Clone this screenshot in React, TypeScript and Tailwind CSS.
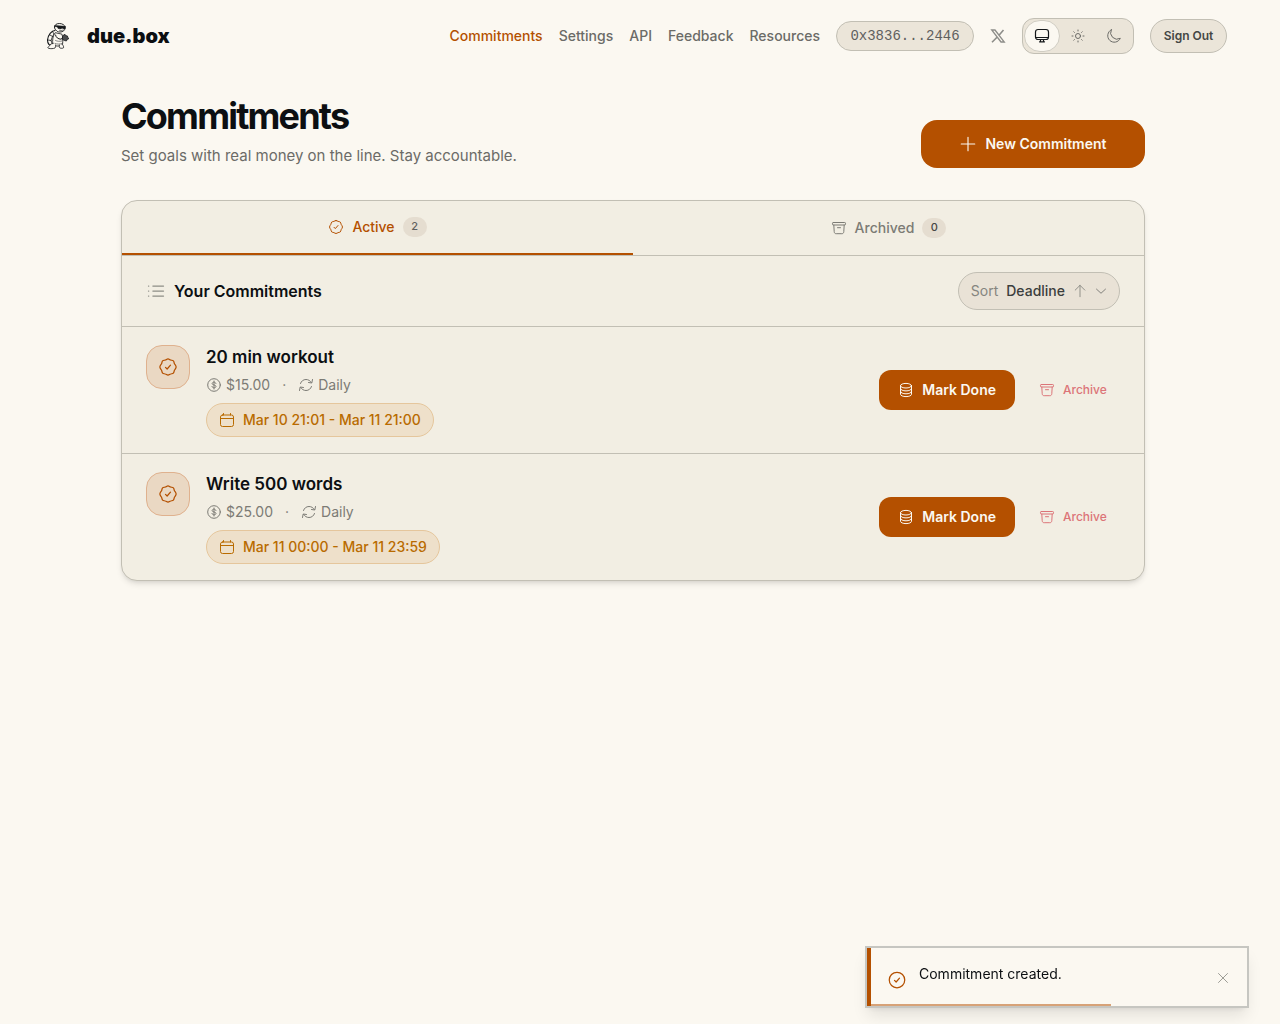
import type { ReactNode } from 'react'

interface IconProps {
  className?: string
}

interface Commitment {
  title: string
  amount: string
  frequency: string
  period: string
}

const commitments: Commitment[] = [
  { title: '20 min workout', amount: '$15.00', frequency: 'Daily', period: 'Mar 10 21:01 - Mar 11 21:00' },
  { title: 'Write 500 words', amount: '$25.00', frequency: 'Daily', period: 'Mar 11 00:00 - Mar 11 23:59' },
]

const navLinks = ['Commitments', 'Settings', 'API', 'Feedback', 'Resources']

function Icon({ className = 'size-4', children }: IconProps & { children: ReactNode }) {
  return (
    <svg
      viewBox="0 0 16 16"
      fill="none"
      stroke="currentColor"
      strokeLinecap="round"
      strokeLinejoin="round"
      aria-hidden="true"
      className={`shrink-0 ${className}`}
    >
      {children}
    </svg>
  )
}

function TurtleLogo() {
  return (
    <svg viewBox="0 0 36 36" fill="none" stroke="#15181a" strokeLinecap="round" strokeLinejoin="round" className="size-9" aria-hidden="true">
      {/* shell */}
      <path d="M16 12.500c-3.400 0-7 4.500-7.500 9.500 0 2 .5 3.500 1.500 4.500l4.500.5" fill="#fbf8f1" strokeWidth="1.100" />
      <path d="M11 17l2.500 1.500M9 22l3 .5M13.500 13.500l1.500 2.500-1.500 2.500-1.500 4 1.500 4" strokeWidth=".8" />
      {/* body */}
      <path d="M16 15c-2 2.500-3 7-2 12 3 1.500 7 1.500 9.500-.5.5-4 .5-7-.5-10z" fill="#fbf8f1" strokeWidth=".8" />
      <path d="M16.500 22.500c2 1 4 1 6.500.5M16 25.500c2 .8 5 .8 7 0" strokeWidth=".5" />
      {/* head */}
      <path d="M15.500 9c0-2 1.800-3.500 4.800-3.500S26 7 26 9.500c0 3-2 4.500-5 4.500-2 0-3-.5-3.500-1.500-1.300-.5-2-2-2-3.500z" fill="#fbf8f1" strokeWidth=".9" />
      <path d="M16 7.500l10.500.8-.3 2.600-2.400-.2-.8-1-.8 1.200-3.200-.5-.6-1.500-2.400-.4z" fill="#15181a" strokeWidth=".5" />
      <path d="M20.500 12.300c1.300.5 2.500.3 3.500-.3" strokeWidth=".6" />
      {/* arm and fist */}
      <path d="M16.500 17c.5 2.500 2.500 4 5.500 4.200l2.500-2" strokeWidth="1" />
      <path d="M24 17.500l2-1.200.5 1.200 2 .5.200 1.500 1.300 1-1.800 1-.8 1.500-2-.5-1.800-1z" fill="#4a4c4d" strokeWidth=".8" />
      {/* feet */}
      <path d="M14 25.500c-2 0-3 1-3.500 2.500-1.500.8-2.200 1.800-1 2.300 2 .6 5 .4 6.500-.3.800-1 .5-2 .5-3" fill="#fbf8f1" strokeWidth=".8" />
      <path d="M20.500 27c-.3 1.500-.5 2.500.5 3 1.500.5 3 .3 3.500-.2.500-1-.3-2-.8-3" fill="#fbf8f1" strokeWidth=".8" />
    </svg>
  )
}

function CheckBadgeIcon({ className }: IconProps) {
  return (
    <Icon className={className}>
      <path d="M8 1.500c.9 0 1.300.7 2.100.9.800.3 1.600.1 2.200.7.600.6.500 1.400.8 2.200.3.800 1.400 1.500 1.400 2.700s-1.100 1.900-1.400 2.700c-.3.800-.2 1.600-.8 2.200-.6.600-1.400.4-2.200.7-.8.200-1.200.9-2.100.9s-1.300-.7-2.100-.9c-.8-.3-1.600-.1-2.200-.7-.6-.6-.5-1.400-.8-2.200C2.600 9.900 1.500 9.200 1.500 8s1.100-1.900 1.400-2.700c.3-.8.200-1.600.8-2.200.6-.6 1.400-.4 2.200-.7.800-.2 1.200-.9 2.100-.9z" />
      <path d="M6 8.300l1.300 1.300L10 6.500" />
    </Icon>
  )
}

function CheckCircleIcon({ className }: IconProps) {
  return (
    <Icon className={className}>
      <circle cx="8" cy="8" r="6.200" />
      <path d="M6 8.300l1.300 1.300L10 6.500" />
    </Icon>
  )
}

function ArchiveIcon({ className }: IconProps) {
  return (
    <Icon className={className}>
      <rect x="1.500" y="2.500" width="13" height="2.500" rx=".8" />
      <path d="M2.800 5l.4 6.500c.1 1.600.8 2.200 2 2.200h5.600c1.200 0 1.900-.6 2-2.200l.4-6.500M6.500 7.700h3" />
    </Icon>
  )
}

function CoinIcon({ className }: IconProps) {
  return (
    <Icon className={className}>
      <circle cx="8" cy="8" r="6.300" />
      <path d="M9.900 6.500C9.800 5.700 9 5.200 8 5.200s-1.900.5-1.900 1.300c0 2 3.900 1 3.900 3 0 .8-.9 1.300-2 1.300s-1.900-.5-2-1.400M8 4v8" />
    </Icon>
  )
}

function RepeatIcon({ className }: IconProps) {
  return (
    <Icon className={className}>
      <path d="M2.500 6.500C3.200 4.200 5.300 2.500 8 2.500c2.300 0 4.200 1.200 5.300 3M14.500 2.500l-.7 3.500-3.300-.5M13.500 9.500c-.7 2.300-2.800 4-5.500 4-2.300 0-4.200-1.200-5.300-3M1.500 13.500l.7-3.500 3.300.5" />
    </Icon>
  )
}

function CalendarIcon({ className }: IconProps) {
  return (
    <Icon className={className}>
      <rect x="1.500" y="3" width="13" height="11.500" rx="2" />
      <path d="M1.500 6.500h13M4.500 1.500V3M11.500 1.500V3" />
    </Icon>
  )
}

function CoinsIcon({ className }: IconProps) {
  return (
    <Icon className={className}>
      <ellipse cx="8" cy="3.700" rx="5.500" ry="2.300" />
      <path d="M2.500 3.700v8.600c0 1.300 2.500 2.300 5.500 2.300s5.500-1 5.500-2.300V3.700M2.500 6.600c0 1.300 2.500 2.300 5.500 2.300s5.500-1 5.500-2.300M2.500 9.500c0 1.300 2.500 2.300 5.500 2.300s5.500-1 5.500-2.300" />
    </Icon>
  )
}

function Header() {
  return (
    <header className="mx-auto flex h-[72px] w-full max-w-[1188px] items-center justify-between">
      <a href="#" className="flex items-center gap-3 text-xl font-black text-[#0c0f12]">
        <TurtleLogo />
        due.box
      </a>
      <nav className="flex items-center gap-4 text-sm font-medium text-[#6b6b67]">
        {navLinks.map((link) => (
          <a key={link} href="#" className={link === 'Commitments' ? 'text-[#b45000]' : ''}>
            {link}
          </a>
        ))}
        <button className="h-[30px] min-w-[138px] rounded-full border border-[#c2bfb4] bg-[#ebe5d9] px-3 font-['Liberation_Mono',monospace] text-sm font-normal text-[#5f605e]">
          0x3836...2446
        </button>
        <a href="#" aria-label="X" className="text-[#8d8d89]">
          <svg viewBox="0 0 16 16" fill="none" stroke="currentColor" className="size-4" aria-hidden="true">
            <path d="M1.700 2h3.300l9.300 12h-3.300z" strokeWidth="1.300" />
            <path d="M13.500 2L9 7.200M7 9.200l-5 5" strokeWidth="1.600" />
          </svg>
        </a>
        <div className="flex rounded-xl border border-[#c2bfb4] bg-[#ebe5d9] p-px">
          <button aria-label="System theme" className="flex h-8 w-9 items-center justify-center rounded-full border border-[#d0cdc3] bg-[#fbf8f1] text-[#15181a]">
            <Icon>
              <rect x="1.500" y="1.500" width="13" height="10" rx="2.500" strokeWidth="1.200" />
              <path d="M2 9.500h12" />
              <path d="M6.500 11.500v2M9.500 11.500v2M5.500 13.800h5" strokeWidth="1.200" />
            </Icon>
          </button>
          <button aria-label="Light theme" className="flex h-8 w-9 items-center justify-center">
            <Icon>
              <circle cx="8" cy="8" r="2.500" />
              <path d="M8 2v1M8 13v1M2 8h1M13 8h1M3.800 3.800l.6.6M11.600 11.600l.6.6M12.200 3.800l-.6.6M4.400 11.600l-.6.6" />
            </Icon>
          </button>
          <button aria-label="Dark theme" className="flex h-8 w-9 items-center justify-center">
            <Icon>
              <path d="M5.300 1.700a6.600 6.600 0 1 0 9 8.600A6.500 6.500 0 0 1 5.300 1.700z" />
            </Icon>
          </button>
        </div>
        <button className="h-[34px] min-w-[77px] rounded-full border border-[#c2bfb4] bg-[#ebe5d9] px-3 text-xs font-semibold text-[#454745]">
          Sign Out
        </button>
      </nav>
    </header>
  )
}

function CommitmentRow({ item }: { item: Commitment }) {
  return (
    <li className="flex items-center justify-between border-t border-[#c2bfb4] px-6 py-4">
      <div className="flex items-start gap-4">
        <div className="mt-0.5 flex size-11 items-center justify-center rounded-2xl border border-[#dfb18e] bg-[#ead8c3] text-[#b45000]">
          <CheckBadgeIcon className="size-5" />
        </div>
        <div>
          <h3 className="text-[17px] leading-7 font-semibold text-[#0c0f12]">{item.title}</h3>
          <div className="mt-1 flex h-5 items-center gap-3 text-sm text-[#7c7b75]">
            <span className="flex items-center gap-1">
              <CoinIcon />
              {item.amount}
            </span>
            <span>·</span>
            <span className="flex items-center gap-1">
              <RepeatIcon />
              {item.frequency}
            </span>
          </div>
          <div className="mt-2 flex h-[34px] w-fit items-center gap-2 rounded-full border border-[#e5c69c] bg-[#eee0ca] px-3 text-sm font-medium text-[#b96b00]">
            <CalendarIcon />
            {item.period}
          </div>
        </div>
      </div>
      <div className="flex items-center gap-3">
        <button className="flex h-10 items-center gap-2 rounded-xl bg-[#b45000] px-[19px] text-sm font-semibold text-[#fbf8f1]">
          <CoinsIcon />
          Mark Done
        </button>
        <button className="flex h-8 min-w-[93px] items-center gap-2 px-3 text-xs font-medium text-[#dc7478]">
          <ArchiveIcon />
          Archive
        </button>
      </div>
    </li>
  )
}

function Toast() {
  return (
    <div role="status" className="fixed right-[31px] bottom-4 flex w-96 border-2 border-[#c6c6c1] bg-[#fbf8f1] shadow-lg">
      <div className="w-1 bg-[#b45000]" />
      <div className="flex flex-1 items-start gap-3 p-4">
        <CheckCircleIcon className="mt-1.5 size-5 text-[#b45000]" />
        <p className="flex-1 text-sm text-[#0c0f12]">Commitment created.</p>
        <button aria-label="Close" className="mt-1.5 text-[#85857f]">
          <Icon>
            <path d="M3.500 3.500l9 9M12.500 3.500l-9 9" strokeWidth=".8" />
          </Icon>
        </button>
      </div>
      <div className="absolute bottom-0 left-1 h-0.5 w-60 bg-[#d7a277]" />
    </div>
  )
}

export default function App() {
  return (
    <div className="min-h-screen bg-[#fbf8f1] pr-3.5 font-['Inter',sans-serif]">
      <Header />
      <main className="mx-auto max-w-5xl pt-6">
        <div className="flex items-end justify-between">
          <div>
            <h1 className="text-4xl leading-10 font-bold tracking-tighter text-[#0c0f12]">Commitments</h1>
            <p className="mt-2 text-[15px] leading-6 text-[#6b6b67]">Set goals with real money on the line. Stay accountable.</p>
          </div>
          <button className="flex h-12 min-w-56 items-center justify-center gap-2 rounded-2xl bg-[#b45000] px-6 text-sm font-semibold text-[#fbf8f1]">
            <Icon className="size-[18px]">
              <path d="M8 2v12M2 8h12" />
            </Icon>
            New Commitment
          </button>
        </div>

        <section className="mt-8 overflow-hidden rounded-2xl border border-[#c2bfb4] bg-[#f2eee3] shadow-md">
          <div role="tablist" className="grid h-[55px] grid-cols-2 border-b border-[#c2bfb4] text-sm font-medium">
            <button role="tab" aria-selected="true" className="flex items-center justify-center gap-2 border-b-2 border-[#b45000] text-[#b45000]">
              <CheckBadgeIcon />
              Active
              <span className="flex h-5 w-6 items-center justify-center rounded-full bg-[#e5ddd0] text-[11px] text-[#5f605e]">2</span>
            </button>
            <button role="tab" aria-selected="false" className="flex items-center justify-center gap-2 text-[#7c7b75]">
              <ArchiveIcon />
              Archived
              <span className="flex h-5 w-6 items-center justify-center rounded-full bg-[#e5ddd0] text-[11px] text-[#454745]">0</span>
            </button>
          </div>
          <div className="flex items-center justify-between px-6 py-4">
            <h2 className="flex items-center gap-2 text-base font-semibold text-[#0c0f12]">
              <Icon className="size-5 text-[#8d8d86]">
                <path d="M5.500 4h8.500M5.500 8h8.500M5.500 12h8.500M2 4h.2M2 8h.2M2 12h.2" />
              </Icon>
              Your Commitments
            </h2>
            <button className="flex h-[38px] items-center gap-2 rounded-full border border-[#c2bfb4] bg-[#e9e2d6] px-3 text-sm text-[#85857f]">
              Sort
              <span className="font-medium text-[#3c3e3d]">Deadline</span>
              <Icon className="size-3.5">
                <path d="M8 14.500V1.500M2.500 7L8 1.500 13.500 7" />
              </Icon>
              <Icon className="size-3 text-[#5f605e]">
                <path d="M2 5.500l6 5.500 6-5.500" />
              </Icon>
            </button>
          </div>
          <ul>
            {commitments.map((item) => (
              <CommitmentRow key={item.title} item={item} />
            ))}
          </ul>
        </section>
      </main>
      <Toast />
    </div>
  )
}
